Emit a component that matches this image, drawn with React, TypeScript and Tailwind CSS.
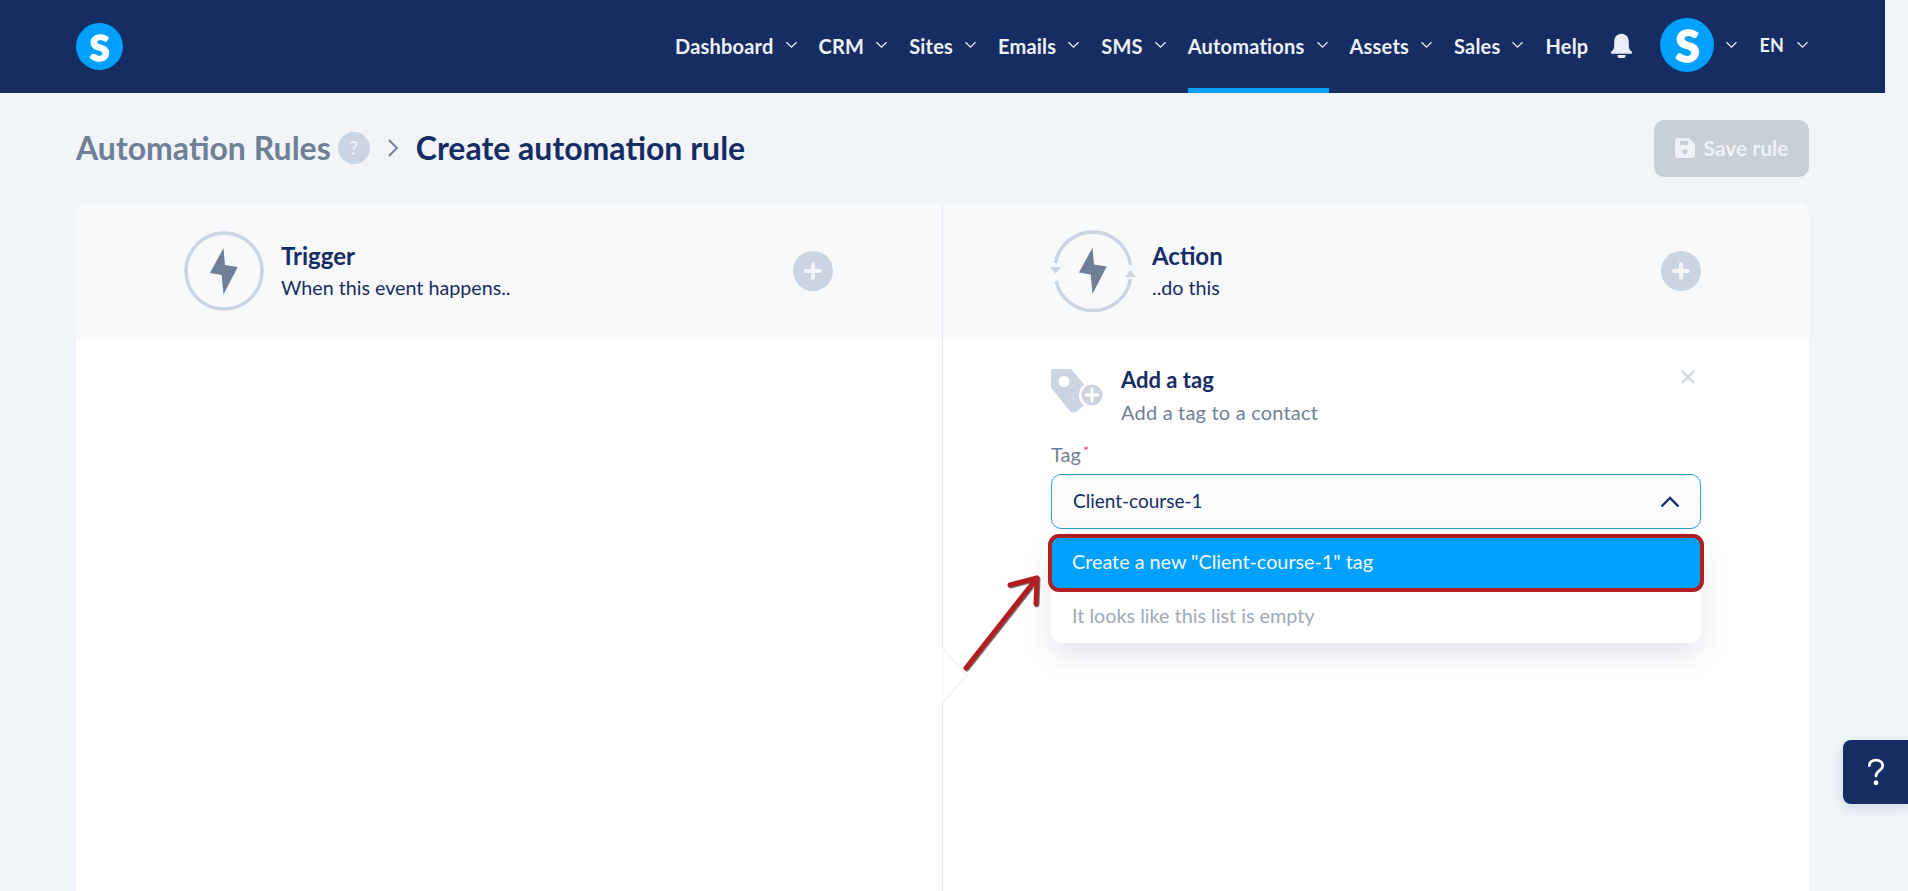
import React from "react";

const Chev = ({ className = "" }: { className?: string }) => (
  <svg viewBox="0 0 12 8" className={`w-[13px] h-[8px] ${className}`} fill="none" stroke="#e6ebf5" strokeWidth="1.3">
    <path d="M1 1.2 L6 6.2 L11 1.2" />
  </svg>
);

const NavItem = ({ label, active }: { label: string; active?: boolean }) => (
  <div className={`relative h-full flex items-center gap-[11px] ${active ? "border-b-[5px] border-[#00a0ff] pt-[5px]" : ""}`}>
    <span className="text-[20px] font-bold text-[#eef2f8] leading-none tracking-[0.2px] -mt-[2px]">{label}</span>
    <Chev className="-mt-[3px]" />
  </div>
);

const Bolt = () => (
  <path d="M39.5 17 L26 42 L37.7 44 L39.5 63.5 L53.7 36 L41 34 Z" fill="#6f7f96" />
);

const PlusCircle = () => (
  <div className="w-[40px] h-[40px] rounded-full bg-[#cbd5e1] flex items-center justify-center">
    <svg viewBox="0 0 24 24" className="w-[24px] h-[24px]" fill="none" stroke="#f1f4f8" strokeWidth="4" strokeLinecap="round">
      <path d="M12 5 V19 M5 12 H19" />
    </svg>
  </div>
);

const LogoS = ({ size, font }: { size: string; font: string }) => (
  <div className={`${size} rounded-full bg-[#00a0ff] flex items-center justify-center shrink-0`}>
    <span className={`${font} font-black text-white leading-none [-webkit-text-stroke:1.5px_white]`}>S</span>
  </div>
);

export default function App() {
  return (
    <div className="relative h-[891px] overflow-hidden bg-[#f1f4f9] font-['Lato','Noto_Sans',sans-serif]">
      <div className="w-[1885px] h-full">
        <header className="h-[93px] bg-[#162d64] flex items-center pl-[76px] pr-[76px]">
          <LogoS size="w-[47px] h-[47px]" font="text-[36px]" />
          <nav className="ml-auto h-full flex items-center gap-[21px]">
            <NavItem label="Dashboard" />
            <NavItem label="CRM" />
            <NavItem label="Sites" />
            <NavItem label="Emails" />
            <NavItem label="SMS" />
            <NavItem label="Automations" active />
            <NavItem label="Assets" />
            <NavItem label="Sales" />
            <span className="text-[20px] font-bold text-[#eef2f8] leading-none tracking-[0.2px] -mt-[2px]">Help</span>
            <svg viewBox="0 0 24 24" className="w-[27px] h-[27px] -mt-[3px] -ml-[1px]" fill="#e8edf5">
              <path d="M12 1.5 c-4.2 0 -6.5 3.2 -6.5 7.2 v4.3 c0 2 -1.2 3.2 -2.7 4.6 c-.6 .6 -.3 1.7 .7 1.7 h17 c1 0 1.3 -1.1 .7 -1.7 c-1.5 -1.4 -2.7 -2.6 -2.7 -4.6 V8.7 c0 -4 -2.3 -7.2 -6.5 -7.2 Z M8.5 20.5 h7 v1.3 c0 .7 -.5 1.2 -1.2 1.2 H9.7 c-.7 0 -1.2 -.5 -1.2 -1.2 Z" />
            </svg>
            <div className="flex items-center gap-[11px] ml-[4px] -mt-[4px]">
              <LogoS size="w-[54px] h-[54px]" font="text-[44px]" />
              <Chev />
            </div>
            <div className="flex items-center gap-[12px] -mt-[4px]">
              <span className="text-[18px] font-bold text-[#eef2f8] leading-none tracking-[0.2px]">EN</span>
              <Chev />
            </div>
          </nav>
        </header>

        <main className="px-[76px]">
          <div className="h-[110px] flex items-center justify-between">
            <div className="flex items-center">
              <span className="text-[32px] font-bold text-[#6f7f96] leading-none">Automation Rules</span>
              <span className="ml-[7px] w-[32px] h-[32px] rounded-full bg-[#cbd5e1] flex items-center justify-center text-[#f1f4f9] text-[18px] font-bold leading-none">?</span>
              <svg viewBox="0 0 12 20" className="ml-[16px] w-[14px] h-[20px]" fill="none" stroke="#6f7f96" strokeWidth="1.8">
                <path d="M2 2 L10 10 L2 18" />
              </svg>
              <span className="ml-[16px] text-[32px] font-bold text-[#162d64] leading-none">Create automation rule</span>
            </div>
            <button className="w-[155px] h-[57px] rounded-[10px] bg-[#c7cfd7] flex items-center justify-center gap-[9px] text-[#eef2f6] text-[21px] font-bold">
              <svg viewBox="0 0 20 20" className="w-[20px] h-[20px]" fill="#eef2f6">
                <path fillRule="evenodd" d="M3 0 H14 L20 6 V17 a3 3 0 0 1 -3 3 H3 a3 3 0 0 1 -3 -3 V3 a3 3 0 0 1 3 -3 Z M5 3 V7 H13 V3 Z M10 11 a2.6 2.6 0 1 0 0 5.2 a2.6 2.6 0 0 0 0 -5.2 Z" />
              </svg>
              Save rule
            </button>
          </div>

          <section className="h-[700px] rounded-t-[12px] bg-white overflow-hidden grid grid-cols-[867px_1fr]">
            <div className="border-r border-[#e5e8ed] relative">
              <div className="h-[136px] bg-[#f8f9fb] flex items-center pl-[108px] pr-[109px]">
                <svg viewBox="0 0 80 80" className="w-[80px] h-[80px]" fill="none">
                  <circle cx="40" cy="40" r="38" stroke="#cbd5e1" strokeWidth="3.5" />
                  <Bolt />
                </svg>
                <div className="ml-[17px] flex-1">
                  <div className="text-[24px] font-bold text-[#162d64] leading-none mb-[10px]">Trigger</div>
                  <div className="text-[19.7px] text-[#162d64] leading-none">When this event happens..</div>
                </div>
                <PlusCircle />
              </div>
              <svg viewBox="0 0 30 58" className="absolute left-[866px] top-[444px] w-[30px] h-[58px] z-10" fill="#ffffff" stroke="#e8eaee" strokeWidth="1">
                <path d="M0.5 1 L25 28 L0.5 56" />
              </svg>
            </div>
            <div>
              <div className="h-[136px] bg-[#f8f9fb] flex items-center pl-[106px] pr-[108px]">
                <svg viewBox="0 0 88 84" className="w-[88px] h-[84px]" fill="none" stroke="#cbd5e1" strokeWidth="3.5">
                  <path d="M6.5 34 A38 38 0 0 1 81.5 36" />
                  <path d="M81.5 50 A38 38 0 0 1 7 52" />
                  <path d="M1 38 H12 L6.5 44.5 Z M76 48 H87 L81.5 41 Z" fill="#cbd5e1" stroke="none" />
                  <g transform="translate(4 1.5)" stroke="none"><Bolt /></g>
                </svg>
                <div className="ml-[15px] flex-1">
                  <div className="text-[24px] font-bold text-[#162d64] leading-none mb-[10px]">Action</div>
                  <div className="text-[19.7px] text-[#162d64] leading-none">..do this</div>
                </div>
                <PlusCircle />
              </div>

              <div className="relative px-[108px] pt-[30px]">
                <div className="flex items-start">
                  <svg viewBox="0 0 54 46" className="w-[54px] h-[46px]">
                    <path fillRule="evenodd" d="M2 0 H20 L37 20 L36 34 L25 43 Q22 45 19 42 L1 20 Q0 19 0 17 V2 Q0 0 2 0 Z M13 7 a5.5 5.5 0 1 0 0 11 a5.5 5.5 0 0 0 0 -11 Z" fill="#cbd5e1" />
                    <circle cx="41" cy="26" r="13" fill="#ffffff" />
                    <circle cx="41" cy="26" r="10.5" fill="#cbd5e1" />
                    <path d="M41 20 V32 M35 26 H47" stroke="#ffffff" strokeWidth="3" strokeLinecap="round" />
                  </svg>
                  <div className="ml-[16px] flex-1">
                    <div className="text-[22px] font-bold text-[#162d64] leading-none mb-[11px]">Add a tag</div>
                    <div className="text-[20px] tracking-[0.2px] text-[#6f7f96] leading-none">Add a tag to a contact</div>
                  </div>
                  <svg viewBox="0 0 14 14" className="w-[14px] h-[14px] mt-[1px] mr-[6px]" fill="none" stroke="#cbd5e1" strokeWidth="2">
                    <path d="M1 1 L13 13 M13 1 L1 13" />
                  </svg>
                </div>

                <div className="mt-[22px] h-[21px] text-[20px] text-[#6f7f96] leading-none">
                  Tag<span className="text-[#e8456b] text-[14px] align-top ml-[2px]">*</span>
                </div>

                <div className="relative">
                  <div className="mt-[9px] h-[55px] rounded-[10px] border border-[#2f9fd0] bg-gradient-to-b from-white to-[#f8f9fb] flex items-center justify-between pl-[21px] pr-[20px] text-[19px] text-[#162d64]">
                    Client-course-1
                    <svg viewBox="0 0 20 12" className="w-[20px] h-[12px]" fill="none" stroke="#162d64" strokeWidth="2.4">
                      <path d="M1.5 10.5 L10 2 L18.5 10.5" />
                    </svg>
                  </div>

                  <div className="absolute left-0 right-0 top-[63px] z-20 rounded-[10px] bg-white shadow-[0_12px_28px_rgba(22,45,100,0.12)] text-[19.8px]">
                    <div className="h-[52px] pb-[3px] bg-[#00a0ff] text-[#f4f9ff] flex items-center pl-[21px] outline-[4px] outline-[#b11e22] -outline-offset-[1px] rounded-[8px] shadow-[1px_2px_2px_rgba(0,0,0,0.4)]">
                      Create a new "Client-course-1" tag
                    </div>
                    <div className="h-[54px] flex items-center pl-[21px] text-[#a0a9b6]">It looks like this list is empty</div>
                  </div>

                  <svg viewBox="0 0 90 105" className="absolute -left-[99px] top-[96px] w-[90px] h-[105px] z-30" fill="none" strokeLinecap="round" strokeLinejoin="round">
                    <g stroke="#7b7b7b" strokeWidth="5" transform="translate(1 1)">
                      <path d="M14 98 L85 8 M58 15 L85 8 L84 34" />
                    </g>
                    <path d="M14 98 L85 8 M58 15 L85 8 L84 34" stroke="#b11e22" strokeWidth="5" />
                  </svg>
                </div>
              </div>
            </div>
          </section>
        </main>
      </div>

      <button className="absolute right-0 top-[740px] w-[65px] h-[64px] bg-[#162d64] rounded-l-[8px] shadow-[0_4px_12px_rgba(22,45,100,0.15)] flex items-center justify-center">
        <svg viewBox="0 0 20 30" className="w-[18px] h-[28px]" fill="none" stroke="#ffffff" strokeWidth="3" strokeLinecap="round">
          <path d="M2.5 8 C2.5 4 6 1.8 10 1.8 C14.5 1.8 17.5 4.5 17.5 8 C17.5 13 10 13.5 10 19.5" />
          <circle cx="10" cy="27" r="1.2" fill="#ffffff" />
        </svg>
      </button>
    </div>
  );
}
